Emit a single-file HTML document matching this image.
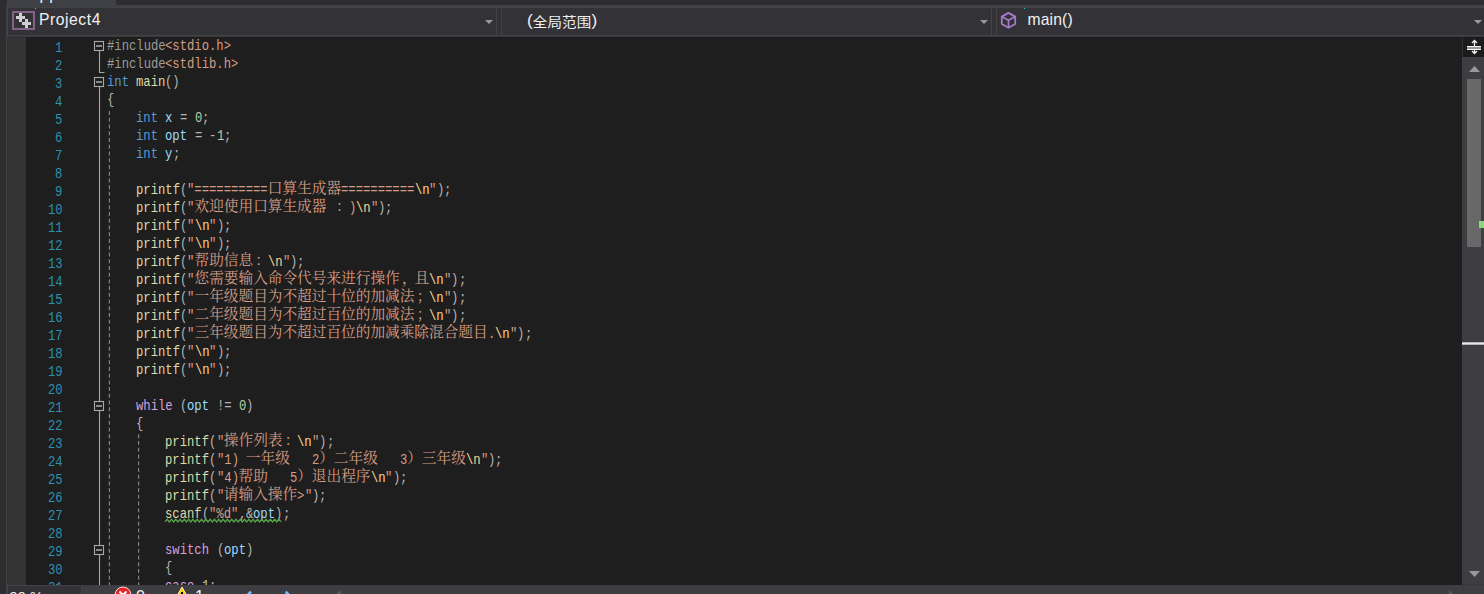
<!DOCTYPE html>
<html lang="zh-CN">
<head>
<meta charset="utf-8">
<title>Project4 - main()</title>
<style>
*{box-sizing:border-box;margin:0;padding:0}
html,body{width:1484px;height:594px;overflow:hidden;background:#2d2d30}
body{position:relative;font-family:"Liberation Sans","Noto Sans CJK SC",sans-serif;color:#f1f1f1}
.abs{position:absolute}
#leftstrip{left:0;top:5px;width:7px;height:589px;background:#2d2d30;border-right:1px solid #3f3f46}
#tab{left:7px;top:0;width:109px;height:5px;background:#3f3f46;overflow:hidden}
#tab span{position:absolute;left:18.5px;top:-15px;letter-spacing:.8px;font-size:16px;line-height:20px;color:#f1f1f1;white-space:nowrap}
#band{left:7px;top:5px;width:1477px;height:2px;background:#3f3f46}
#nav{left:7px;top:7px;width:1477px;height:30px;background:#333337;border-top:1px solid #434346;border-bottom:1px solid #38383b;box-shadow:inset 0 -1px 0 #3f3f46}
.dd{position:absolute;top:-1px;height:29px;background:#333337;border:1px solid #434346}
.dd .txt{position:absolute;top:-1px;line-height:26px;font-size:15.7px;white-space:nowrap;color:#f1f1f1}
.dd .txt b{font-weight:normal;display:inline-block;font-size:14.5px;letter-spacing:.17px;position:relative;top:1px;transform:scaleY(.91);transform-origin:50% 78%}
.dd .txt u{text-decoration:none;position:relative;top:.4px;font-size:17.2px}
.dd .arr{position:absolute;right:3px;top:12px;width:0;height:0;border-left:4px solid transparent;border-right:4px solid transparent;border-top:4px solid #999}
.dot{position:absolute;width:1px;height:1px;background:#00e5e5}
#editor{left:7px;top:37px;width:1455px;height:548px;background:#1e1e1e;overflow:hidden}
#gutter{left:7px;top:37px;width:19px;height:548px;background:#333333}
#code{left:0;top:0;width:1462px;height:585px;overflow:hidden}
.ln{position:absolute;left:26px;width:36.7px;height:18px}
.ln i{position:absolute;right:0;top:2px;font-style:normal;font-family:"Liberation Mono",monospace;font-size:15.5px;line-height:18px;color:#2b91af;white-space:pre;transform:scaleX(.7885);transform-origin:100% 0}
.cl{position:absolute;left:106.5px;height:18px;width:1300px;color:#dcdcdc}
.cl i{position:absolute;top:1px;font-style:normal;font-family:"Liberation Mono",monospace;font-size:15px;line-height:18px;white-space:pre;transform:scaleX(.8146);transform-origin:0 0;font-kerning:none;font-variant-ligatures:none}
.cl b{position:absolute;top:-3px;font-weight:normal;font-family:"Noto Serif CJK SC","Noto Sans CJK SC",serif;font-size:14.667px;line-height:18px;white-space:pre;text-spacing-trim:space-all;font-kerning:none}
.pp{color:#9b9b9b}.s{color:#d69d85}.k{color:#569cd6}.f{color:#dcdcaa}.p{color:#b4b4b4}
.v{color:#9cdcfe}.n{color:#b5cea8}.c{color:#d8a0df}.e{color:#ffd68f}
#vsb{left:1462px;top:37px;width:22px;height:548px;background:#3e3e42}
#split{left:1462px;top:37px;width:22px;height:20px;background:#1b1b1c;border-left:1px solid #2d2d30}
#thumb{left:1467px;top:79px;width:14px;height:168px;background:#686868}
#bottom{left:7px;top:585px;width:1477px;height:9px;background:#3e3e42;overflow:hidden}
#zoom{left:0;top:0;width:75px;height:20px;background:#333337;border:1px solid #434346}
#zoom span{position:absolute;left:1.5px;top:2px;font-size:14.7px;line-height:18px;color:#f1f1f1;white-space:nowrap}
.bt{position:absolute;font-size:16px;line-height:18px;color:#f1f1f1;top:3px}
</style>
</head>
<body>
<div id="leftstrip" class="abs"></div>
<div id="tab" class="abs"><span>.cpp</span></div>
<div id="band" class="abs"></div>
<div id="nav" class="abs">
  <div class="dd" style="left:0;width:490px">
    <svg class="abs" style="left:4px;top:3px" width="24" height="20" viewBox="0 0 24 20">
      <rect x="1" y="1" width="21" height="17" fill="none" stroke="#8f6694" stroke-width="1.8"/>
      <path d="M7 2h3v3h3v3h-3v3h-3v-3h-3v-3h3z M13 8h3v3h3v3h-3v3h-3v-3h-3v-3h3z" fill="#cfcfcf"/>
    </svg>
    <span class="txt" style="left:31px;letter-spacing:.55px">Project4</span>
    <div class="arr"></div>
  </div>
  <div class="dd" style="left:494px;width:491px">
    <span class="txt" style="left:25px"><u>(</u><b>全局范围</b><u>)</u></span>
    <div class="arr"></div>
  </div>
  <div class="dd" style="left:989px;width:490px">
    <svg class="abs" style="left:2px;top:3px" width="20" height="20" viewBox="999 11 20 20">
      <path d="M1008.5 12.9 L1015.2 16.6 V24 L1008.5 27.7 L1001.8 24 V16.6 Z" fill="none" stroke="#a57bc9" stroke-width="1.8" stroke-linejoin="round"/>
      <path d="M1008.5 27.7 V20.3 L1002 16.8 M1008.5 20.3 L1015 16.8" fill="none" stroke="#a57bc9" stroke-width="1.7"/>
    </svg>
    <span class="txt" style="left:30.5px;letter-spacing:.15px">main()</span>
    <div class="arr"></div>
  </div>
</div>
<div class="dot" style="left:35px;top:8px"></div>
<div class="dot" style="left:1024px;top:8px"></div>
<div id="editor" class="abs"></div>
<div id="gutter" class="abs"></div>
<div id="code" class="abs">
<div class="ln" style="top:37px"><i>1</i></div>
<div class="cl" style="top:37px"><i class="pp" style="left:0px">#include</i><i class="s" style="left:58.67px">&lt;stdio.h&gt;</i></div>
<div class="ln" style="top:55px"><i>2</i></div>
<div class="cl" style="top:55px"><i class="pp" style="left:0px">#include</i><i class="s" style="left:58.67px">&lt;stdlib.h&gt;</i></div>
<div class="ln" style="top:73px"><i>3</i></div>
<div class="cl" style="top:73px"><i class="k" style="left:0px">int</i><i class="f" style="left:29.33px">main</i><i class="p" style="left:58.67px">()</i></div>
<div class="ln" style="top:91px"><i>4</i></div>
<div class="cl" style="top:91px"><i class="p" style="left:0px">{</i></div>
<div class="ln" style="top:109px"><i>5</i></div>
<div class="cl" style="top:109px"><i class="k" style="left:29.33px">int</i><i class="v" style="left:58.67px">x</i><i class="p" style="left:73.33px">=</i><i class="n" style="left:88px">0</i><i class="p" style="left:95.33px">;</i></div>
<div class="ln" style="top:127px"><i>6</i></div>
<div class="cl" style="top:127px"><i class="k" style="left:29.33px">int</i><i class="v" style="left:58.67px">opt</i><i class="p" style="left:88px">=</i><i class="p" style="left:102.67px">-</i><i class="n" style="left:110px">1</i><i class="p" style="left:117.33px">;</i></div>
<div class="ln" style="top:145px"><i>7</i></div>
<div class="cl" style="top:145px"><i class="k" style="left:29.33px">int</i><i class="v" style="left:58.67px">y</i><i class="p" style="left:66px">;</i></div>
<div class="ln" style="top:163px"><i>8</i></div>
<div class="ln" style="top:181px"><i>9</i></div>
<div class="cl" style="top:181px"><i class="f" style="left:29.33px">printf</i><i class="p" style="left:73.33px">(</i><i class="s" style="left:80.67px">"==========</i><b class="s" style="left:161.33px">口算生成器</b><i class="s" style="left:234.67px">==========</i><i class="e" style="left:308px">\n</i><i class="s" style="left:322.67px">"</i><i class="p" style="left:330px">)</i><i class="p" style="left:337.33px">;</i></div>
<div class="ln" style="top:199px"><i>10</i></div>
<div class="cl" style="top:199px"><i class="f" style="left:29.33px">printf</i><i class="p" style="left:73.33px">(</i><i class="s" style="left:80.67px">"</i><b class="s" style="left:88px">欢迎使用口算生成器</b><b class="s" style="left:229.53px">：</b><i class="s" style="left:242px">)</i><i class="e" style="left:249.33px">\n</i><i class="s" style="left:264px">"</i><i class="p" style="left:271.33px">)</i><i class="p" style="left:278.67px">;</i></div>
<div class="ln" style="top:217px"><i>11</i></div>
<div class="cl" style="top:217px"><i class="f" style="left:29.33px">printf</i><i class="p" style="left:73.33px">(</i><i class="s" style="left:80.67px">"</i><i class="e" style="left:88px">\n</i><i class="s" style="left:102.67px">"</i><i class="p" style="left:110px">)</i><i class="p" style="left:117.33px">;</i></div>
<div class="ln" style="top:235px"><i>12</i></div>
<div class="cl" style="top:235px"><i class="f" style="left:29.33px">printf</i><i class="p" style="left:73.33px">(</i><i class="s" style="left:80.67px">"</i><i class="e" style="left:88px">\n</i><i class="s" style="left:102.67px">"</i><i class="p" style="left:110px">)</i><i class="p" style="left:117.33px">;</i></div>
<div class="ln" style="top:253px"><i>13</i></div>
<div class="cl" style="top:253px"><i class="f" style="left:29.33px">printf</i><i class="p" style="left:73.33px">(</i><i class="s" style="left:80.67px">"</i><b class="s" style="left:88px">帮助信息</b><b class="s" style="left:148.87px">：</b><i class="e" style="left:161.33px">\n</i><i class="s" style="left:176px">"</i><i class="p" style="left:183.33px">)</i><i class="p" style="left:190.67px">;</i></div>
<div class="ln" style="top:271px"><i>14</i></div>
<div class="cl" style="top:271px"><i class="f" style="left:29.33px">printf</i><i class="p" style="left:73.33px">(</i><i class="s" style="left:80.67px">"</i><b class="s" style="left:88px">您需要输入命令代号来进行操作</b><b class="s" style="left:295.53px">，</b><b class="s" style="left:308px">且</b><i class="e" style="left:322.67px">\n</i><i class="s" style="left:337.33px">"</i><i class="p" style="left:344.67px">)</i><i class="p" style="left:352px">;</i></div>
<div class="ln" style="top:289px"><i>15</i></div>
<div class="cl" style="top:289px"><i class="f" style="left:29.33px">printf</i><i class="p" style="left:73.33px">(</i><i class="s" style="left:80.67px">"</i><b class="s" style="left:88px">一年级题目为不超过十位的加减法</b><b class="s" style="left:310.2px">；</b><i class="e" style="left:322.67px">\n</i><i class="s" style="left:337.33px">"</i><i class="p" style="left:344.67px">)</i><i class="p" style="left:352px">;</i></div>
<div class="ln" style="top:307px"><i>16</i></div>
<div class="cl" style="top:307px"><i class="f" style="left:29.33px">printf</i><i class="p" style="left:73.33px">(</i><i class="s" style="left:80.67px">"</i><b class="s" style="left:88px">二年级题目为不超过百位的加减法</b><b class="s" style="left:310.2px">；</b><i class="e" style="left:322.67px">\n</i><i class="s" style="left:337.33px">"</i><i class="p" style="left:344.67px">)</i><i class="p" style="left:352px">;</i></div>
<div class="ln" style="top:325px"><i>17</i></div>
<div class="cl" style="top:325px"><i class="f" style="left:29.33px">printf</i><i class="p" style="left:73.33px">(</i><i class="s" style="left:80.67px">"</i><b class="s" style="left:88px">三年级题目为不超过百位的加减乘除混合题目</b><i class="s" style="left:381.33px">.</i><i class="e" style="left:388.66px">\n</i><i class="s" style="left:403.33px">"</i><i class="p" style="left:410.66px">)</i><i class="p" style="left:418px">;</i></div>
<div class="ln" style="top:343px"><i>18</i></div>
<div class="cl" style="top:343px"><i class="f" style="left:29.33px">printf</i><i class="p" style="left:73.33px">(</i><i class="s" style="left:80.67px">"</i><i class="e" style="left:88px">\n</i><i class="s" style="left:102.67px">"</i><i class="p" style="left:110px">)</i><i class="p" style="left:117.33px">;</i></div>
<div class="ln" style="top:361px"><i>19</i></div>
<div class="cl" style="top:361px"><i class="f" style="left:29.33px">printf</i><i class="p" style="left:73.33px">(</i><i class="s" style="left:80.67px">"</i><i class="e" style="left:88px">\n</i><i class="s" style="left:102.67px">"</i><i class="p" style="left:110px">)</i><i class="p" style="left:117.33px">;</i></div>
<div class="ln" style="top:379px"><i>20</i></div>
<div class="ln" style="top:397px"><i>21</i></div>
<div class="cl" style="top:397px"><i class="c" style="left:29.33px">while</i><i class="p" style="left:73.33px">(</i><i class="v" style="left:80.67px">opt</i><i class="p" style="left:110px">!=</i><i class="n" style="left:132px">0</i><i class="p" style="left:139.33px">)</i></div>
<div class="ln" style="top:415px"><i>22</i></div>
<div class="cl" style="top:415px"><i class="p" style="left:29.33px">{</i></div>
<div class="ln" style="top:433px"><i>23</i></div>
<div class="cl" style="top:433px"><i class="f" style="left:58.67px">printf</i><i class="p" style="left:102.67px">(</i><i class="s" style="left:110px">"</i><b class="s" style="left:117.33px">操作列表</b><b class="s" style="left:178.2px">：</b><i class="e" style="left:190.67px">\n</i><i class="s" style="left:205.33px">"</i><i class="p" style="left:212.67px">)</i><i class="p" style="left:220px">;</i></div>
<div class="ln" style="top:451px"><i>24</i></div>
<div class="cl" style="top:451px"><i class="f" style="left:58.67px">printf</i><i class="p" style="left:102.67px">(</i><i class="s" style="left:110px">"1)</i><b class="s" style="left:139.33px">一年级</b><i class="s" style="left:205.33px">2</i><b class="s" style="left:212.67px">）二年级</b><i class="s" style="left:293.33px">3</i><b class="s" style="left:300.67px">）三年级</b><i class="e" style="left:359.33px">\n</i><i class="s" style="left:374px">"</i><i class="p" style="left:381.33px">)</i><i class="p" style="left:388.66px">;</i></div>
<div class="ln" style="top:469px"><i>25</i></div>
<div class="cl" style="top:469px"><i class="f" style="left:58.67px">printf</i><i class="p" style="left:102.67px">(</i><i class="s" style="left:110px">"4)</i><b class="s" style="left:132px">帮助</b><i class="s" style="left:183.33px">5</i><b class="s" style="left:190.67px">）退出程序</b><i class="e" style="left:264px">\n</i><i class="s" style="left:278.67px">"</i><i class="p" style="left:286px">)</i><i class="p" style="left:293.33px">;</i></div>
<div class="ln" style="top:487px"><i>26</i></div>
<div class="cl" style="top:487px"><i class="f" style="left:58.67px">printf</i><i class="p" style="left:102.67px">(</i><i class="s" style="left:110px">"</i><b class="s" style="left:117.33px">请输入操作</b><i class="s" style="left:190.67px">&gt;</i><i class="s" style="left:198px">"</i><i class="p" style="left:205.33px">)</i><i class="p" style="left:212.67px">;</i></div>
<div class="ln" style="top:505px"><i>27</i></div>
<div class="cl" style="top:505px"><i class="f" style="left:58.67px">scanf</i><i class="p" style="left:95.33px">(</i><i class="s" style="left:102.67px">"%d"</i><i class="p" style="left:132px">,</i><i class="p" style="left:139.33px">&amp;</i><i class="v" style="left:146.67px">opt</i><i class="p" style="left:168.67px">)</i><i class="p" style="left:176px">;</i></div>
<div class="ln" style="top:523px"><i>28</i></div>
<div class="ln" style="top:541px"><i>29</i></div>
<div class="cl" style="top:541px"><i class="c" style="left:58.67px">switch</i><i class="p" style="left:110px">(</i><i class="v" style="left:117.33px">opt</i><i class="p" style="left:139.33px">)</i></div>
<div class="ln" style="top:559px"><i>30</i></div>
<div class="cl" style="top:559px"><i class="p" style="left:58.67px">{</i></div>
<div class="ln" style="top:577px"><i>31</i></div>
<div class="cl" style="top:577px"><i class="c" style="left:58.67px">case</i><i class="n" style="left:95.33px">1</i><i class="p" style="left:102.67px">:</i></div>
<svg class="abs" style="left:0;top:0" width="1462" height="585" viewBox="0 0 1462 585">
<path d="M99.5 51V72.5H104.5 M99.5 87V585" fill="none" stroke="#a8a8a8" stroke-width="1.1"/>
<rect x="94.5" y="41.5" width="9" height="9" fill="#1e1e1e" stroke="#a8a8a8" stroke-width="1.1"/><rect x="96" y="45.5" width="6" height="1" fill="#f4f4f4"/>
<rect x="94.5" y="77.5" width="9" height="9" fill="#1e1e1e" stroke="#a8a8a8" stroke-width="1.1"/><rect x="96" y="81.5" width="6" height="1" fill="#f4f4f4"/>
<rect x="94.5" y="401.5" width="9" height="9" fill="#1e1e1e" stroke="#a8a8a8" stroke-width="1.1"/><rect x="96" y="405.5" width="6" height="1" fill="#f4f4f4"/>
<rect x="94.5" y="545.5" width="9" height="9" fill="#1e1e1e" stroke="#a8a8a8" stroke-width="1.1"/><rect x="96" y="549.5" width="6" height="1" fill="#f4f4f4"/>
<line x1="109.4" y1="109" x2="109.4" y2="585" stroke="#808080" stroke-width="1.2" stroke-dasharray="4 2.733" stroke-dashoffset="4.670"/>
<line x1="138.6" y1="433" x2="138.6" y2="585" stroke="#808080" stroke-width="1.2" stroke-dasharray="4 2.733" stroke-dashoffset="5.486"/>
<path d="M165 521.9 L167.15 519.3 L169.30 521.9 L171.45 519.3 L173.60 521.9 L175.75 519.3 L177.90 521.9 L180.05 519.3 L182.20 521.9 L184.35 519.3 L186.50 521.9 L188.65 519.3 L190.80 521.9 L192.95 519.3 L195.10 521.9 L197.25 519.3 L199.40 521.9 L201.55 519.3 L203.70 521.9 L205.85 519.3 L208.00 521.9 L210.15 519.3 L212.30 521.9 L214.45 519.3 L216.60 521.9 L218.75 519.3 L220.90 521.9 L223.05 519.3 L225.20 521.9 L227.35 519.3 L229.50 521.9 L231.65 519.3 L233.80 521.9 L235.95 519.3 L238.10 521.9 L240.25 519.3 L242.40 521.9 L244.55 519.3 L246.70 521.9 L248.85 519.3 L251.00 521.9 L253.15 519.3 L255.30 521.9 L257.45 519.3 L259.60 521.9 L261.75 519.3 L263.90 521.9 L266.05 519.3 L268.20 521.9 L270.35 519.3 L272.50 521.9 L274.65 519.3 L276.80 521.9 L278.95 519.3 L281.10 521.9" fill="none" stroke="#5aa84c" stroke-width="1.25"/>
</svg>
</div>
<div id="vsb" class="abs"></div>
<div id="split" class="abs">
  <svg width="21" height="20" viewBox="0 0 21 20" style="position:absolute;left:0;top:0">
    <path d="M11.5 3.5V16.5 M9 6l2.5-2.5L14 6 M9 14l2.5 2.5L14 14" stroke="#f1f1f1" stroke-width="1.3" fill="none"/>
    <rect x="4" y="9" width="14" height="4" fill="#999"/>
    <rect x="4" y="9" width="14" height="1" fill="#f5f5f5"/>
    <rect x="4" y="12" width="14" height="1" fill="#f5f5f5"/>
  </svg>
</div>
<div id="thumb" class="abs"></div>
<svg class="abs" style="left:1462px;top:57px" width="22" height="528">
  <path d="M7 15 L12.5 9 L18 15Z" fill="#999"/>
  <path d="M7 514 L12.5 520 L18 514Z" fill="#999"/>
  <rect x="0" y="527" width="22" height="1" fill="#39393d"/>
  <rect x="17" y="164" width="5" height="7" fill="#8bd87a"/>
  <rect x="0" y="285.3" width="22" height="2.4" fill="#e8e8e8"/>
</svg>
<div id="bottom" class="abs">
  <div id="zoom" class="abs"><span>99 %</span></div>
  <svg class="abs" style="left:107px;top:1px" width="18" height="18" viewBox="0 0 18 18">
    <circle cx="9" cy="9" r="8" fill="#e5252a" stroke="#f6dada" stroke-width="1"/>
    <path d="M5.5 5.5l7 7M12.5 5.5l-7 7" stroke="#fff" stroke-width="2"/>
  </svg>
  <span class="bt" style="left:129px">0</span>
  <svg class="abs" style="left:165px;top:1px" width="20" height="18" viewBox="0 0 20 18">
    <path d="M10 1 L19 17 H1 Z" fill="#ffcc00" stroke="#fff2a8" stroke-width="1"/>
    <path d="M10 6v6M10 14v2" stroke="#000" stroke-width="2"/>
  </svg>
  <span class="bt" style="left:188px">1</span>
  <svg class="abs" style="left:236px;top:5px" width="120" height="16" viewBox="0 0 120 16">
    <path d="M8 1.7 L1 8.7 L8 15.7" stroke="#75beff" stroke-width="2.5" fill="none"/>
    <path d="M42.6 1.7 L49.6 8.7 L42.6 15.7" stroke="#75beff" stroke-width="2.5" fill="none"/>
    <path d="M98 0 V10 L92 5Z" fill="#58585c"/>
  </svg>
  <svg class="abs" style="left:1440px;top:5px" width="10" height="12"><path d="M2 0 L8 6 L2 12Z" fill="#58585c"/></svg>
  <div class="abs" style="left:1455px;top:0;width:1px;height:9px;background:#39393d"></div>
</div>
</body>
</html>
